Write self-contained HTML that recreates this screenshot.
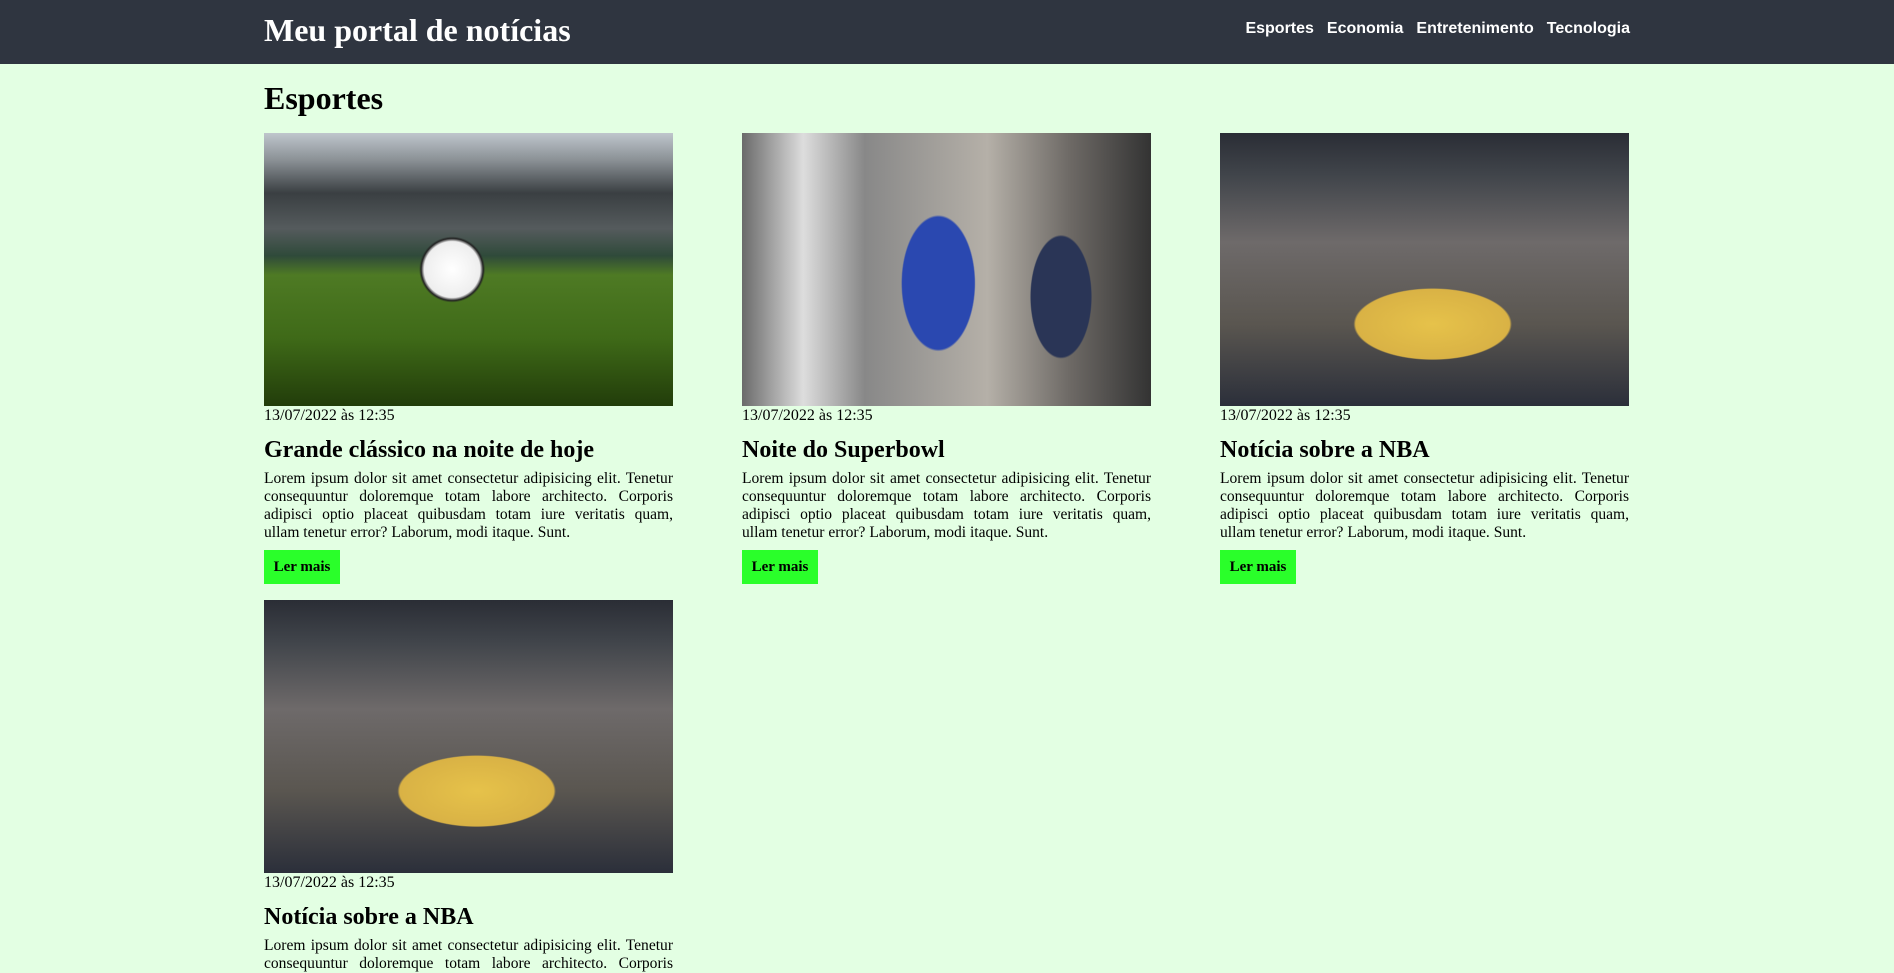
<!DOCTYPE html>
<html><head><meta charset="utf-8"><style>
*{box-sizing:border-box}
body{margin:0;background:#e3ffe3;font-family:"Liberation Serif",serif;color:#000;width:1894px;height:939px;overflow:hidden}
header{background:#2f3540;height:64px}
.wrap{width:1368px;margin-left:264px;position:relative}
header h1{margin:0;color:#fff;font-size:32px;line-height:60px;font-weight:bold}
nav{position:absolute;right:2px;top:0;line-height:58px;font-family:"Liberation Sans",sans-serif;font-weight:bold;font-size:16px;color:#fff}
nav span{margin-left:13px}
h2{margin:0;font-size:32px;line-height:40px;padding-top:78px;position:absolute;top:-64px}
.grid{position:absolute;top:133px;left:264px;display:grid;grid-template-columns:409px 409px 409px;column-gap:69px;row-gap:16px}
.img{width:409px;height:273px}
.date{font-size:16px;line-height:18px;margin:1px 0 0}
h3{font-size:24px;margin:11px 0 6px;line-height:28px}
p{font-size:15.55px;line-height:18px;margin:0;white-space:nowrap}
p span{display:block;text-align:justify;text-align-last:justify}
p span.l{text-align-last:left}
.btn{display:inline-block;background:#2aff2a;font-weight:bold;font-size:15px;width:76px;height:34px;line-height:34px;text-align:center;margin-top:8px}
.ball{background:radial-gradient(circle at 46% 50%,#fff 0,#eee 28px,#222 31px,transparent 33px),linear-gradient(#bfc6cc 0,#8a9095 10%,#3a3f42 22%,#555b5d 35%,#2f4a3a 45%,#4e7a24 52%,#3f6a18 75%,#223d0a 100%)}
.nfl{background:radial-gradient(ellipse 60px 110px at 48% 55%,#2a48b0 0,#2a48b0 60%,transparent 62%),radial-gradient(ellipse 50px 100px at 78% 60%,#2a3556 0,#2a3556 60%,transparent 62%),linear-gradient(90deg,#6a6a6a,#ddd 15%,#888 30%,#b5b0a8 60%,#6e6a66 80%,#333)}
.nba{background:radial-gradient(ellipse 110px 50px at 52% 70%,#e6c24a 0,#d9b245 70%,transparent 72%),linear-gradient(#2a2d35 0,#40444a 15%,#6e6a6a 40%,#5a5650 70%,#2b2f3a 100%)}
</style></head><body>
<header><div class="wrap"><h1>Meu portal de notícias</h1><nav><span>Esportes</span><span>Economia</span><span>Entretenimento</span><span>Tecnologia</span></nav></div></header>
<div class="wrap"><h2>Esportes</h2></div>
<div class="grid">
<div><div class="img ball"></div><div class="date">13/07/2022 às 12:35</div><h3>Grande clássico na noite de hoje</h3><p><span>Lorem ipsum dolor sit amet consectetur adipisicing elit. Tenetur</span><span>consequuntur doloremque totam labore architecto. Corporis</span><span>adipisci optio placeat quibusdam totam iure veritatis quam,</span><span class="l">ullam tenetur error? Laborum, modi itaque. Sunt.</span></p><span class="btn">Ler mais</span></div>
<div><div class="img nfl"></div><div class="date">13/07/2022 às 12:35</div><h3>Noite do Superbowl</h3><p><span>Lorem ipsum dolor sit amet consectetur adipisicing elit. Tenetur</span><span>consequuntur doloremque totam labore architecto. Corporis</span><span>adipisci optio placeat quibusdam totam iure veritatis quam,</span><span class="l">ullam tenetur error? Laborum, modi itaque. Sunt.</span></p><span class="btn">Ler mais</span></div>
<div><div class="img nba"></div><div class="date">13/07/2022 às 12:35</div><h3>Notícia sobre a NBA</h3><p><span>Lorem ipsum dolor sit amet consectetur adipisicing elit. Tenetur</span><span>consequuntur doloremque totam labore architecto. Corporis</span><span>adipisci optio placeat quibusdam totam iure veritatis quam,</span><span class="l">ullam tenetur error? Laborum, modi itaque. Sunt.</span></p><span class="btn">Ler mais</span></div>
<div><div class="img nba"></div><div class="date">13/07/2022 às 12:35</div><h3>Notícia sobre a NBA</h3><p><span>Lorem ipsum dolor sit amet consectetur adipisicing elit. Tenetur</span><span>consequuntur doloremque totam labore architecto. Corporis</span></p></div>
</div>
</body></html>
